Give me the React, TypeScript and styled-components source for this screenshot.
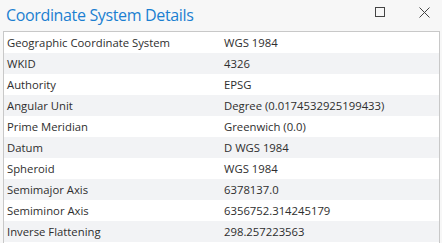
import React from "react";
import styled, { createGlobalStyle } from "styled-components";

const GlobalStyle = createGlobalStyle`
  html, body {
    margin: 0;
    padding: 0;
    background: #f7f7f7;
  }
  body {
    font-family: "Open Sans", "Noto Sans", sans-serif;
  }
`;

const Window = styled.div`
  width: 442px;
  height: 243px;
  background: #f7f7f7;
  display: flex;
  flex-direction: column;
  overflow: hidden;
`;

const Header = styled.div`
  height: 31px;
  display: flex;
  align-items: center;
  gap: 8px;
  padding: 0 0 0 6px;
`;

const Title = styled.div`
  flex: 1;
  font-size: 16px;
  letter-spacing: -0.35px;
  color: #1b7fd1;
  margin-top: -1px;
`;

const IconButton = styled.div`
  width: 36px;
  align-self: stretch;
  display: flex;
  justify-content: center;
  padding-top: 7px;
  box-sizing: border-box;
`;

const Table = styled.div`
  margin: 0 2px 0 3px;
  border: 1px solid #c8c8c8;
  border-bottom: none;
  background: #fff;
  flex: 1;
`;

const Row = styled.div<{ $alt: boolean }>`
  display: grid;
  grid-template-columns: 217px 1fr;
  height: 21px;
  align-items: center;
  background: ${(p) => (p.$alt ? "#f2f3f5" : "#ffffff")};
  font-size: 11.3px;
  color: #2e2e2e;
`;

const Cell = styled.div`
  padding-left: 3px;
  white-space: nowrap;
`;

const rows: [string, string][] = [
  ["Geographic Coordinate System", "WGS 1984"],
  ["WKID", "4326"],
  ["Authority", "EPSG"],
  ["Angular Unit", "Degree (0.0174532925199433)"],
  ["Prime Meridian", "Greenwich (0.0)"],
  ["Datum", "D WGS 1984"],
  ["Spheroid", "WGS 1984"],
  ["Semimajor Axis", "6378137.0"],
  ["Semiminor Axis", "6356752.314245179"],
  ["Inverse Flattening", "298.257223563"],
];

export default function App() {
  return (
    <Window>
      <GlobalStyle />
      <Header>
        <Title>Coordinate System Details</Title>
        <IconButton>
          <svg width="10" height="10" viewBox="0 0 10 10">
            <rect x="0.5" y="0.5" width="9" height="9" fill="none" stroke="#444" strokeWidth="1" />
          </svg>
        </IconButton>
        <IconButton>
          <svg width="11" height="11" viewBox="0 0 11 11">
            <path d="M0.5 0.5 L10.5 10.5 M10.5 0.5 L0.5 10.5" stroke="#444" strokeWidth="1" />
          </svg>
        </IconButton>
      </Header>
      <Table>
        {rows.map(([k, v], i) => (
          <Row key={k} $alt={i % 2 === 1}>
            <Cell>{k}</Cell>
            <Cell>{v}</Cell>
          </Row>
        ))}
      </Table>
    </Window>
  );
}
